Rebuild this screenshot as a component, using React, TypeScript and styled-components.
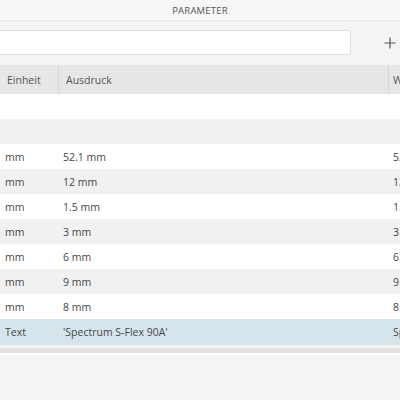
import React from "react";
import styled, { createGlobalStyle } from "styled-components";

const Global = createGlobalStyle`
  html, body { margin: 0; padding: 0; background: #f5f5f5; }
  body { font-family: "Open Sans", "Noto Sans", sans-serif; }
  * { box-sizing: border-box; }
`;

const Panel = styled.div`
  width: 400px;
  height: 400px;
  overflow: hidden;
  display: flex;
  flex-direction: column;
  background: #f5f5f5;
`;

const TitleBar = styled.div`
  height: 21px;
  flex: none;
  display: flex;
  align-items: center;
  justify-content: center;
  background: #f7f7f7;
  border-bottom: 1px solid #ebebeb;
  font-size: 9.5px;
  letter-spacing: 0.2px;
  color: #555;
`;

const Toolbar = styled.div`
  height: 44px;
  flex: none;
  display: flex;
  align-items: flex-start;
  padding-top: 9px;
  background: #f4f4f4;
`;

const Search = styled.div`
  width: 353px;
  height: 25px;
  margin-left: -2px;
  background: #fff;
  border: 1px solid #e1e1e1;
  border-radius: 2px;
`;

const AddButton = styled.div`
  flex: 1;
  height: 25px;
  display: flex;
  align-items: center;
  justify-content: flex-end;
  padding-right: 4px;
`;

const Table = styled.div`
  display: flex;
  flex-direction: column;
  flex: none;
`;

const Row = styled.div<{ $bg: string; $h?: number }>`
  display: grid;
  grid-template-columns: 58px 330px 1fr;
  height: ${(p) => p.$h ?? 25}px;
  background: ${(p) => p.$bg};
  align-items: center;
  font-size: 10.5px;
  color: #464646;
  white-space: nowrap;
  overflow: hidden;
`;

const HeadCell = styled.div<{ $divider?: boolean; $pad?: number }>`
  height: 100%;
  display: flex;
  align-items: center;
  padding-left: ${(p) => p.$pad ?? 7}px;
  border-left: ${(p) => (p.$divider ? "1px solid #d6d6d6" : "none")};
  color: #555;
  overflow: hidden;
`;

const Cell = styled.div<{ $pad: number }>`
  padding-left: ${(p) => p.$pad}px;
  overflow: hidden;
`;

const ScrollArea = styled.div`
  flex: none;
  height: 10px;
  padding-top: 3px;
  background: #f3f3f3;
  border-bottom: 2px solid #fff;
`;

const ScrollTrack = styled.div`
  height: 5px;
  background: #e3e3e3;
`;

const Rest = styled.div`
  flex: 1;
  background: #f5f5f5;
`;

const rows: [string, string, string][] = [
  ["", "", ""],
  ["", "", ""],
  ["mm", "52.1 mm", "52.100"],
  ["mm", "12 mm", "12.000"],
  ["mm", "1.5 mm", "1.500"],
  ["mm", "3 mm", "3.000"],
  ["mm", "6 mm", "6.000"],
  ["mm", "9 mm", "9.000"],
  ["mm", "8 mm", "8.000"],
];

export default function App() {
  return (
    <>
      <Global />
      <Panel>
        <TitleBar>PARAMETER</TitleBar>
        <Toolbar>
          <Search />
          <AddButton>
            <svg width="12" height="12" viewBox="0 0 12 12">
              <path d="M6 0.5V11.5M0.5 6H11.5" stroke="#555" strokeWidth="1.2" fill="none" />
            </svg>
          </AddButton>
        </Toolbar>
        <Table>
          <Row $bg="#e6e6e6" $h={29}>
            <HeadCell>Einheit</HeadCell>
            <HeadCell $divider>Ausdruck</HeadCell>
            <HeadCell $divider $pad={4}>Wert</HeadCell>
          </Row>
          {rows.map((r, i) => (
            <Row key={i} $bg={i % 2 === 0 ? "#ffffff" : "#f1f1f1"}>
              <Cell $pad={5}>{r[0]}</Cell>
              <Cell $pad={5}>{r[1]}</Cell>
              <Cell $pad={5}>{r[2]}</Cell>
            </Row>
          ))}
          <Row $bg="#d6e5ec" $h={26}>
            <Cell $pad={5}>Text</Cell>
            <Cell $pad={5}>'Spectrum S-Flex 90A'</Cell>
            <Cell $pad={5}>Spectrum</Cell>
          </Row>
        </Table>
        <ScrollArea>
          <ScrollTrack />
        </ScrollArea>
        <Rest />
      </Panel>
    </>
  );
}
